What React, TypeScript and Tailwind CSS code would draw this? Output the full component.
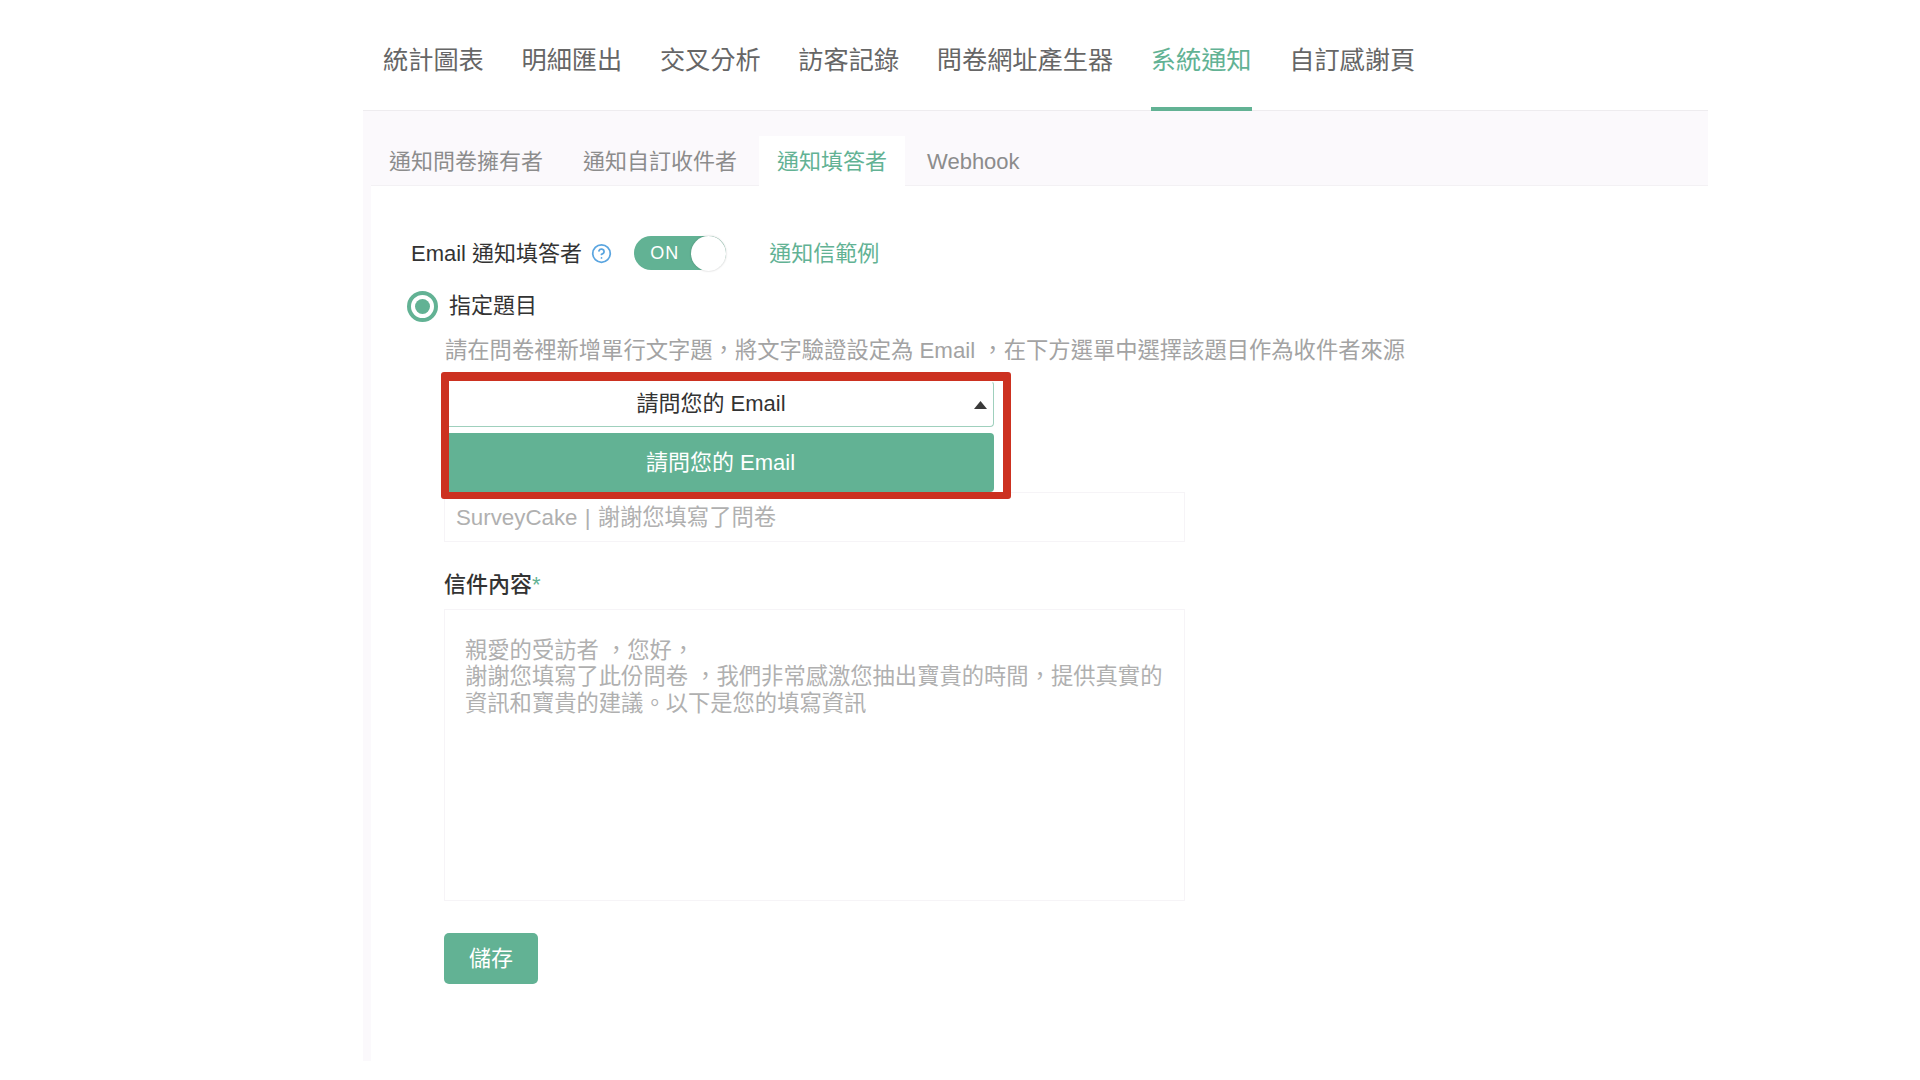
import { CircleHelp } from "lucide-react";

const FONT = "font-['Liberation_Sans','Noto_Sans_CJK_TC',sans-serif]";
const nav = ["統計圖表", "明細匯出", "交叉分析", "訪客記錄", "問卷網址產生器", "系統通知", "自訂感謝頁"];
const C = "\uFF0C";

export default function App() {
  return (
    <div className={`${FONT} h-[1080px] w-full overflow-hidden bg-white`}>
      <div className="ml-[363px] w-[1345px]">
        <div className="flex h-[111px] gap-[37.7px] border-b border-[#eeecef] pl-[20px]">
          {nav.map((n) => (
            <div
              key={n}
              className={`h-[111px] border-b-[4px] pt-[42px] text-[25.2px] leading-[36px] ${
                n === "系統通知" ? "border-[#62b294] text-[#62b294]" : "border-transparent text-[#666666]"
              }`}
            >
              {n}
            </div>
          ))}
        </div>

        <div className="bg-[#fbf9fc] pl-[8px]">
          <div className="flex h-[75px] items-end border-b border-[#f3f1f4] text-[22px] text-[#8c8c8c]">
            <div className="mr-[4px] flex h-[49px] items-center px-[18px] pt-[1px]">通知問卷擁有者</div>
            <div className="mr-[4px] flex h-[49px] items-center px-[18px] pt-[1px]">通知自訂收件者</div>
            <div className="mb-[-1px] mr-[4px] flex h-[50px] items-center bg-white px-[18px] text-[#62b294]">通知填答者</div>
            <div className="flex h-[49px] items-center px-[18px] pt-[1px]">Webhook</div>
          </div>

          <div className="h-[875px] bg-white pt-[50px] text-[22px]">
            <div className="flex h-[34px] items-center pl-[40px] text-[#333333]">
              <span>Email 通知填答者</span>
              <CircleHelp className="ml-[9px] text-[#5aa5e0]" size={21} strokeWidth={2} />
              <div className="ml-[22px] flex h-[34px] w-[92px] items-center justify-between rounded-full bg-[#62b294] pl-[16px]">
                <span className="text-[18px] tracking-[1px] text-white">ON</span>
                <div className="h-[35px] w-[35px] rounded-full bg-white shadow-[0_0_2px_rgba(0,0,0,0.25)]"></div>
              </div>
              <span className="ml-[43px] text-[#62b294]">通知信範例</span>
            </div>

            <div className="mt-[21px] flex h-[31px] items-center pl-[36px]">
              <div className="flex h-[31px] w-[31px] items-center justify-center rounded-full border-[4px] border-[#62b294] bg-white">
                <div className="h-[15px] w-[15px] rounded-full bg-[#62b294]"></div>
              </div>
              <span className="ml-[11px] mt-[-2px] text-[#333333]">指定題目</span>
            </div>

            <div className="ml-[73px] w-[1040px]">
              <div className="mt-[14px] h-[30px] whitespace-nowrap pl-[1px] text-[22.3px] leading-[30px] text-[#a3a3a3]">
                請在問卷裡新增單行文字題{C}將文字驗證設定為 Email {C}在下方選單中選擇該題目作為收件者來源
              </div>

              <div className="relative mt-[15px] h-[46px] w-[550px]">
                <div className="absolute left-[-3px] top-[-9px] z-10 h-[127px] w-[570px] rounded-[3px] border-x-[8px] border-b-[7px] border-t-[9px] border-[#cc3120] bg-white"></div>
                <div className="absolute bottom-0 left-[5px] right-0 top-0 z-20 flex items-center justify-center rounded-r-[4px] border-y-[1.5px] border-r-[1.5px] border-t-transparent border-[#9fd0bd] bg-white pb-[2px] pr-[20px] text-[#333333]">
                  請問您的 Email
                  <svg className="absolute right-[6px] top-[19px]" width="13" height="8" viewBox="0 0 13 8">
                    <path d="M6.5 0L13 8H0z" fill="#3a3a3a" />
                  </svg>
                </div>
                <div className="absolute left-[5px] top-[52px] z-20 flex h-[59px] w-[545px] items-center justify-center rounded-r-[4px] bg-[#62b294] pr-[2px] text-white">
                  請問您的 Email
                </div>
              </div>

              <div className="mt-[65px] h-[50px] w-[741px] border border-[#f6f4f7] pl-[11px] text-[22.3px] leading-[49px] text-[#b0b0b0]">
                SurveyCake <span className="mx-[1px]">|</span> 謝謝您填寫了問卷
              </div>

              <div className="mt-[28px] h-[30px] font-medium leading-[30px] text-[#333333]">
                信件內容<span className="text-[#62b294]">*</span>
              </div>

              <div className="mt-[9px] h-[292px] w-[741px] border border-[#f6f4f7] pl-[20px] pr-[15px] pt-[28px] text-[22.3px] leading-[26.4px] text-[#b0b0b0]">
                親愛的受訪者 {C}您好{C}
                <br />
                謝謝您填寫了此份問卷 {C}我們非常感激您抽出寶貴的時間{C}提供真實的
                <br />
                資訊和寶貴的建議。以下是您的填寫資訊
              </div>

              <div className="mt-[32px] flex h-[51px] w-[94px] items-center justify-center rounded-[5px] bg-[#62b294] text-white">
                儲存
              </div>
            </div>
          </div>
        </div>
      </div>
    </div>
  );
}
